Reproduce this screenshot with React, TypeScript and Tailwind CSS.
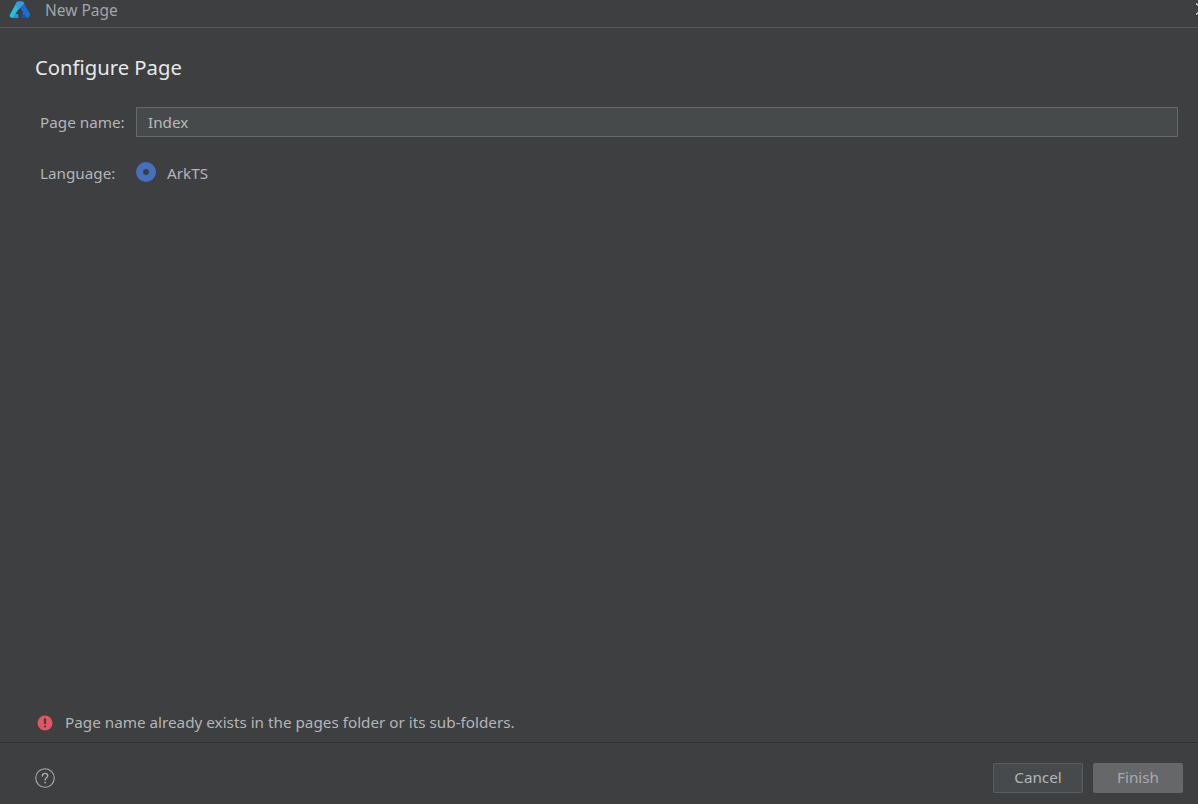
const FONT = "font-['Noto_Sans','Open_Sans',sans-serif]";

function Logo() {
  return (
    <svg width="22" height="18" viewBox="0 0 22 18" fill="none" aria-hidden>
      <path d="M7.6 1.2C8 .5 8.6.2 9.4.2h3.4c.7 0 1.2.3 1.6.9l1 1.7L9.6 9 6.4 3.4z" fill="#2f9fe6" />
      <path d="M15 2.4l5.8 10.2c.4.7.4 1.3 0 2l-1.4 2.2-3.2-.1-4.6-8.1z" fill="#1b6fd0" />
      <path d="M6.6 3.2L9.4 8 4.6 16.8H2.8c-.9 0-1.5-.3-1.9-1-.4-.7-.4-1.4 0-2.1z" fill="#27bfe0" />
      <path d="M4.4 16.9L6.8 13h2.8v3.9z" fill="#1e9ad8" />
      <path d="M12.4 13h3l2 3.9h-5z" fill="#1557b0" />
      <path d="M11 7.4l3.7 4.3h-2.2v4.6H9.5v-4.6H7.3z" fill="#3d3f41" />
    </svg>
  );
}

function ErrorIcon() {
  return (
    <svg width="16" height="16" viewBox="0 0 16 16" aria-hidden>
      <circle cx="8" cy="8" r="7.5" fill="#e25663" />
      <rect x="6.9" y="3.2" width="2.2" height="6" rx="1" fill="#3d3f41" />
      <rect x="6.9" y="10.4" width="2.2" height="2.2" rx="1.1" fill="#3d3f41" />
    </svg>
  );
}

function HelpIcon() {
  return (
    <svg width="20" height="20" viewBox="0 0 20 20" fill="none" aria-hidden>
      <circle cx="10" cy="10" r="9.25" stroke="#a9abad" strokeWidth="1.1" />
      <path d="M7.4 8c0-1.6 1.1-2.6 2.7-2.6S12.7 6.4 12.7 7.8c0 1.9-2.6 2-2.6 4.2" stroke="#a9abad" strokeWidth="1.4" strokeLinecap="round" />
      <circle cx="10.1" cy="14.6" r="0.9" fill="#a9abad" />
    </svg>
  );
}

function CloseStub() {
  // the close cross is cut off by the right edge of the capture
  return (
    <svg className="absolute right-0 top-[3px]" width="2" height="12" viewBox="0 0 2 12" fill="none" aria-hidden>
      <path d="M0 0.5l2 1.7M0 11.5l2-1.7" stroke="#e8e8e8" strokeWidth="1.2" />
    </svg>
  );
}

export default function App() {
  return (
    <div className={`${FONT} flex flex-col h-[804px] w-[1198px] bg-[#3d3f41] text-[15.26px] text-[#b4b6b7] overflow-hidden`}>
      {/* Title bar */}
      <div className="relative flex items-center h-[28px] shrink-0 pl-[9px] pb-[7px] border-b border-[#555759]">
        <Logo />
        <span className="ml-[14px] pt-[2px] text-[15.5px] text-[#a3a5a7]">New Page</span>
        <CloseStub />
      </div>

      {/* Form */}
      <div className="flex-1 flex flex-col pt-[25px] pl-[35px] pr-[20px]">
        <h1 className="text-[20.25px] leading-[28px] text-[#e6e8e9]">Configure Page</h1>

        <div className="flex items-center mt-[26px] ml-[5px]">
          <label className="w-[96px]">Page name:</label>
          <div className="flex items-center flex-1 h-[30px] pl-[11px] pt-[1px] bg-[#464a4b] border border-[#66696a] text-[#b8babb]">
            Index
          </div>
        </div>

        <div className="flex items-center mt-[25px] ml-[5px]">
          <label className="w-[96px]">Language:</label>
          <span className="flex items-center justify-center w-[20px] h-[20px] mb-[2px] rounded-full bg-[#4570bd]">
            <span className="w-[6px] h-[6px] rounded-full bg-[#3d3f41]" />
          </span>
          <span className="ml-[11px]">ArkTS</span>
        </div>

        <div className="mt-auto flex items-center h-[22px] mb-[8px] ml-[2px]">
          <ErrorIcon />
          <span className="ml-[12px] pb-[2px]">Page name already exists in the pages folder or its sub-folders.</span>
        </div>
      </div>

      {/* Footer */}
      <div className="flex items-center justify-between h-[62px] shrink-0 pt-[8px] pl-[35px] pr-[15px] border-t border-[#2f3133]">
        <HelpIcon />
        <div className="flex gap-[10px]">
          <button className="w-[90px] h-[30px] rounded-[2px] bg-[#474a4c] border border-[#5a5d5f] text-[#b4b6b7]">Cancel</button>
          <button className="w-[90px] h-[30px] rounded-[2px] bg-[#656769] text-[#a9abac]">Finish</button>
        </div>
      </div>
    </div>
  );
}
